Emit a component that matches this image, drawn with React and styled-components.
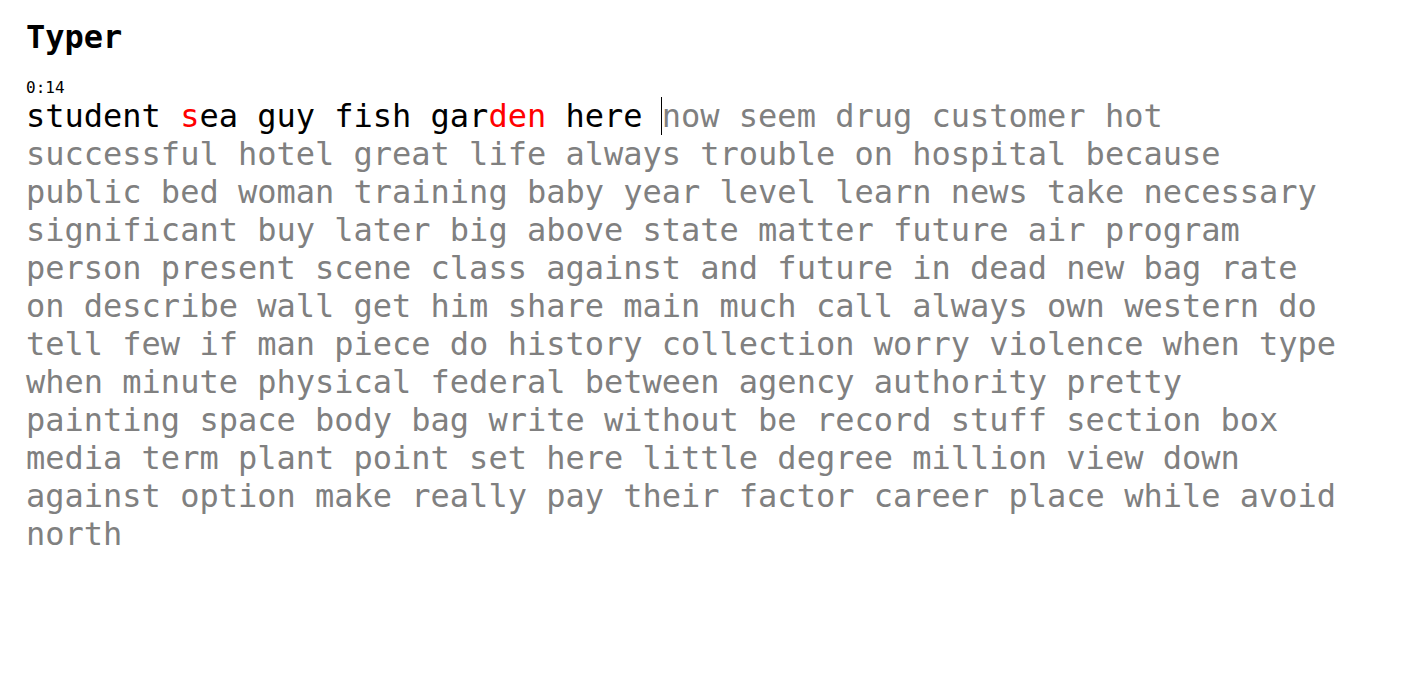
import React from "react";
import styled, { createGlobalStyle } from "styled-components";

const Global = createGlobalStyle`
  html, body { margin: 0; padding: 0; background: #fff; }
  body { font-family: "DejaVu Sans Mono", monospace; color: #000; }
`;

const Page = styled.main`
  padding: 18px 26px;
`;

const Title = styled.h1`
  margin: 0 0 22px;
  font-size: 32px;
  font-weight: bold;
  font-family: "DejaVu Sans Mono", monospace;
`;

const Timer = styled.div`
  font-size: 16px;
`;

const Passage = styled.div`
  max-width: 1316px;
  font-size: 32px;
  white-space: normal;
`;

const colors = { ok: "#000000", bad: "#ff0000", todo: "#808080" };

const Char = styled.span`
  color: ${(p) => colors[p.$state]};
  ${(p) =>
    p.$cursor
      ? `border-left: 1px solid #000; margin-left: -1px;`
      : ""}
`;

const TEXT =
  "student sea guy fish garden here now seem drug customer hot successful hotel great life always trouble on hospital because public bed woman training baby year level learn news take necessary significant buy later big above state matter future air program person present scene class against and future in dead new bag rate on describe wall get him share main much call always own western do tell few if man piece do history collection worry violence when type when minute physical federal between agency authority pretty painting space body bag write without be record stuff section box media term plant point set here little degree million view down against option make really pay their factor career place while avoid north";

const TYPED = 33;
const ERRORS = new Set([8, 24, 25, 26]);

export default function App() {
  const chars = TEXT.split("");
  return (
    <Page>
      <Global />
      <Title>Typer</Title>
      <Timer>0:14</Timer>
      <Passage>
        {chars.map((c, i) => {
          const state = i < TYPED ? (ERRORS.has(i) ? "bad" : "ok") : "todo";
          return (
            <Char key={i} $state={state} $cursor={i === TYPED}>
              {c}
            </Char>
          );
        })}
      </Passage>
    </Page>
  );
}
